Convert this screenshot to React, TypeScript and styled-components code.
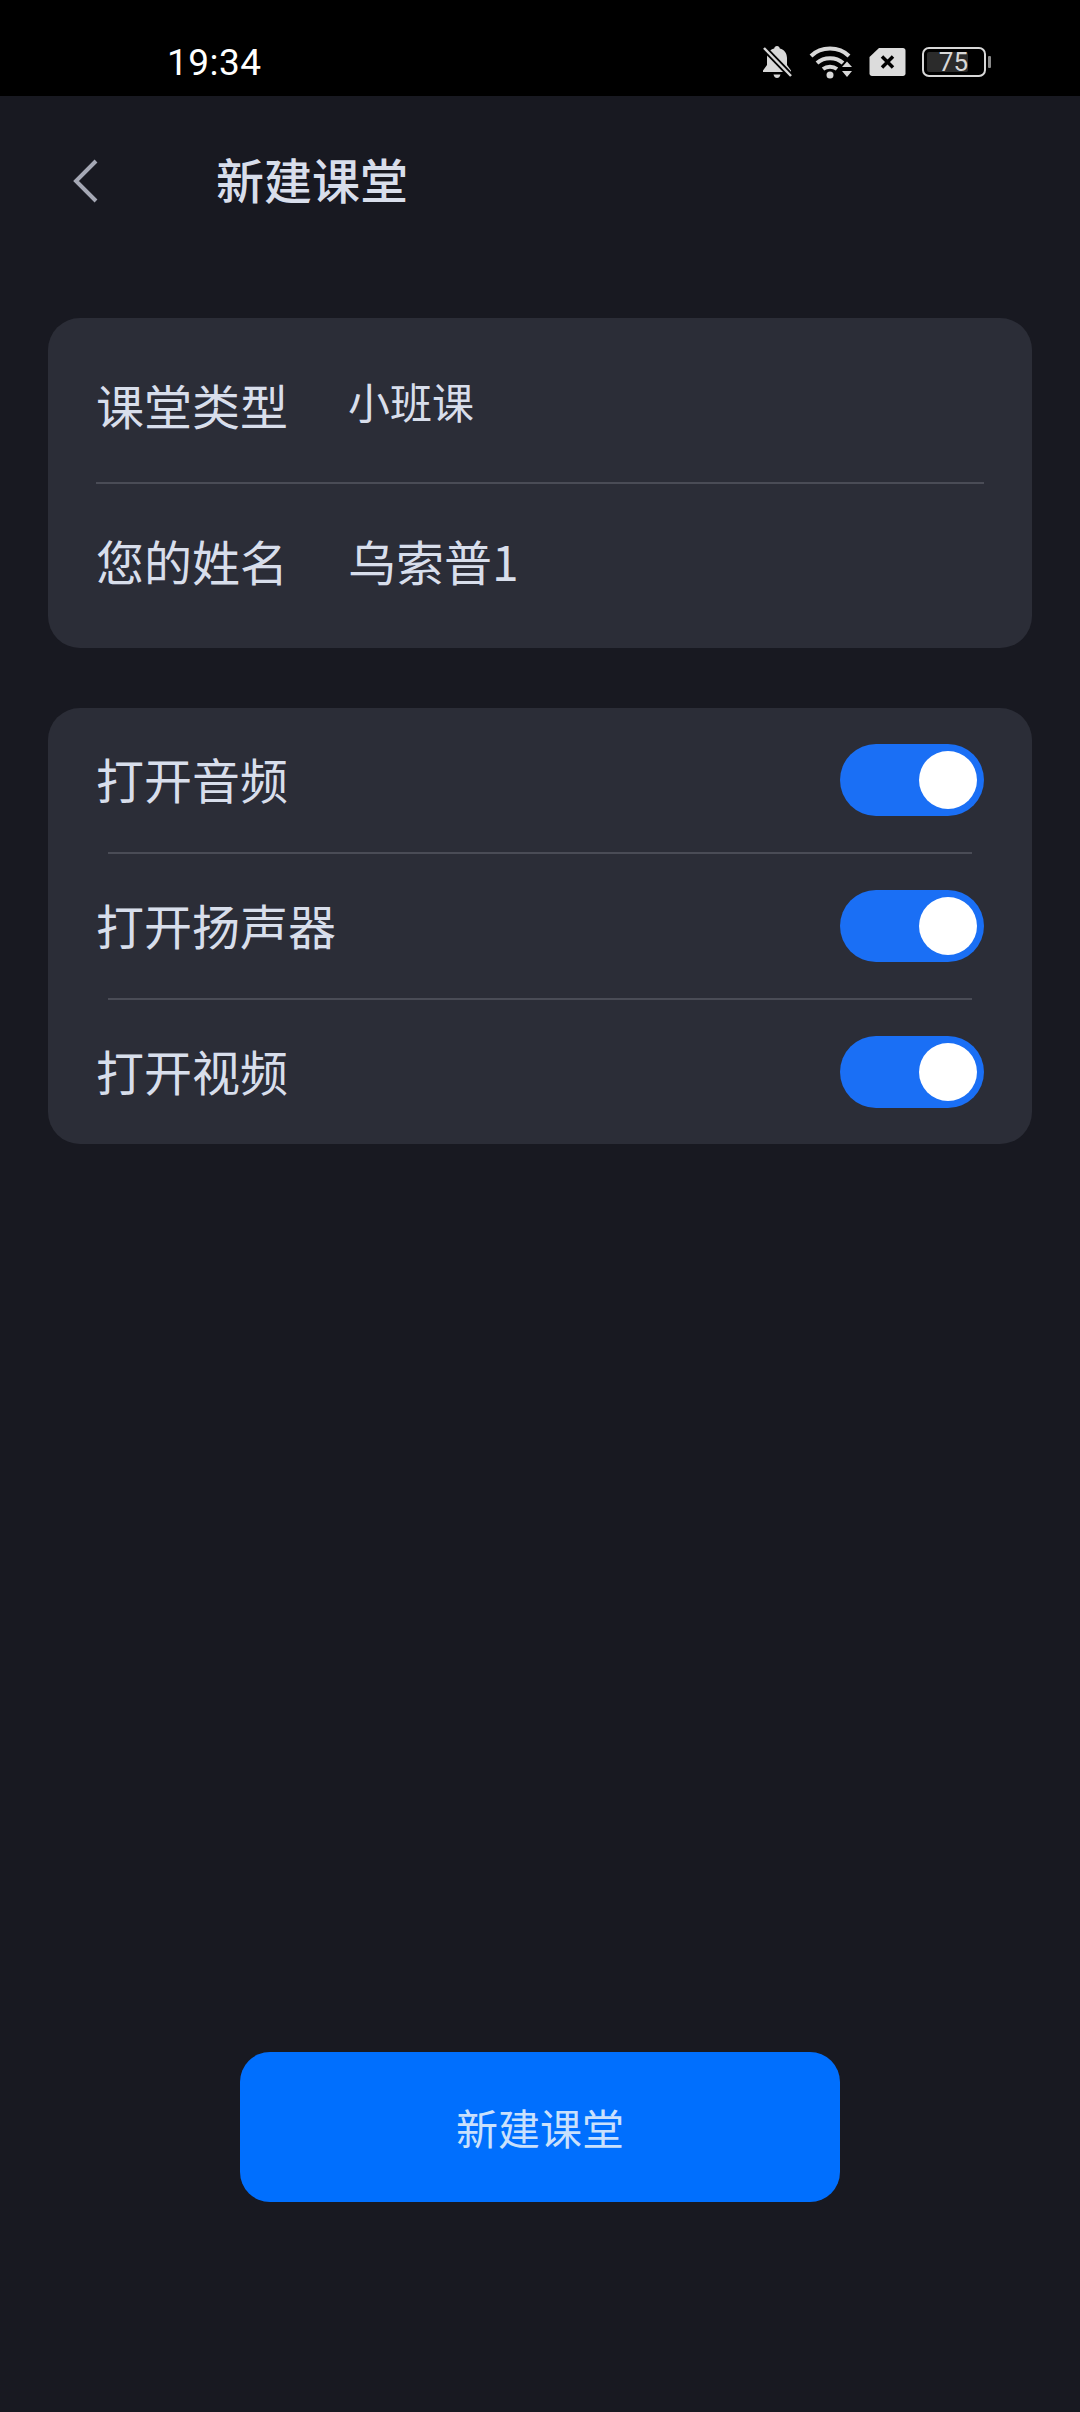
import styled, { createGlobalStyle } from "styled-components";

const GlobalStyle = createGlobalStyle`
  * {
    box-sizing: border-box;
  }
  html, body {
    margin: 0;
    padding: 0;
    background: #181921;
    font-family: "Noto Sans CJK SC", "Noto Sans", sans-serif;
  }
`;

const Page = styled.div`
  width: 1080px;
  height: 2412px;
  display: flex;
  flex-direction: column;
  background: #181921;
  overflow: hidden;
`;

const StatusBar = styled.div`
  height: 96px;
  flex-shrink: 0;
  display: flex;
  align-items: center;
  background: #000;
  padding: 0 90px 0 167px;
  color: #fff;
`;

const Time = styled.div`
  font-family: Roboto, sans-serif;
  font-size: 37px;
  line-height: 44px;
  letter-spacing: 0.5px;
  margin-top: 30px;
  margin-right: auto;
`;

const StatusIcons = styled.div`
  display: flex;
  align-items: center;
  margin-top: 27px;
`;

const BellIcon = styled.svg`
  width: 32px;
  height: 34px;
  margin-right: 16px;
`;

const WifiIcon = styled.svg`
  width: 44px;
  height: 34px;
  margin-right: 16px;
`;

const SimIcon = styled.svg`
  width: 37px;
  height: 30px;
  margin-right: 16px;
`;

const Battery = styled.div`
  position: relative;
  width: 64px;
  height: 30px;
  border: 2px solid #d8d8d8;
  border-radius: 7px;
  padding: 3px;
  margin-right: 4px;
  display: flex;

  &::after {
    content: "";
    position: absolute;
    right: -7px;
    top: 7px;
    width: 3px;
    height: 12px;
    border-radius: 1px;
    background: #8a8a8a;
  }
`;

const BatteryLevel = styled.div`
  width: 41px;
  height: 20px;
  border-radius: 2px;
  background: #2b2b2b;
  color: #d8d8d8;
  font-family: Roboto, sans-serif;
  font-size: 26px;
  line-height: 20px;
  text-align: right;
`;

const Header = styled.div`
  height: 170px;
  flex-shrink: 0;
  display: flex;
  align-items: center;
  padding-left: 72px;
`;

const BackIcon = styled.svg`
  width: 28px;
  height: 44px;
  margin-right: 116px;
`;

const Title = styled.div`
  font-size: 48px;
  font-weight: 500;
  line-height: 60px;
  margin-bottom: 6px;
  color: #d8deeb;
`;

const Card = styled.div`
  margin: 0 48px;
  padding: 0 48px;
  background: #2b2d37;
  border-radius: 32px;
`;

const InfoCard = styled(Card)`
  margin-top: 52px;
`;

const SwitchCard = styled(Card)`
  margin-top: 60px;
  height: 436px;
  display: flex;
  flex-direction: column;
  justify-content: center;
`;

const InfoRow = styled.div<{ $shift: number }>`
  height: 165px;
  display: flex;
  align-items: center;
  padding-top: ${(p) => (p.$shift > 0 ? p.$shift : 0)}px;
  padding-bottom: ${(p) => (p.$shift < 0 ? -p.$shift : 0)}px;
  & + & {
    border-top: 2px solid #4a4c56;
    margin-top: -1px;
    height: 166px;
  }
`;

const Label = styled.div`
  font-size: 48px;
  line-height: 60px;
  color: #d8deeb;
`;

const InfoLabel = styled(Label)`
  width: 252px;
`;

const SwitchLabel = styled(Label)`
  margin-bottom: 4px;
`;

const Value = styled.div<{ $small?: boolean }>`
  font-size: ${(p) => (p.$small ? "42px" : "48px")};
  line-height: 60px;
  color: #d8deeb;
  margin-top: ${(p) => (p.$small ? "-6px" : "0")};
`;

const SwitchRow = styled.div`
  height: 146px;
  flex-shrink: 0;
  display: flex;
  align-items: center;
  justify-content: space-between;
`;

const Divider = styled.div`
  height: 2px;
  flex-shrink: 0;
  margin: -1px 12px;
  background: #4a4c56;
`;

const Toggle = styled.div`
  width: 144px;
  height: 72px;
  border-radius: 36px;
  background: #1a6ff5;
  display: flex;
  align-items: center;
  justify-content: flex-end;
  padding-right: 7px;
`;

const Knob = styled.div`
  width: 58px;
  height: 58px;
  border-radius: 50%;
  background: #fff;
`;

const CreateButton = styled.div`
  width: 600px;
  height: 150px;
  flex-shrink: 0;
  margin: auto auto 210px;
  border-radius: 30px;
  background: #006ffe;
  color: #c9e0fc;
  font-size: 42px;
  padding-bottom: 2px;
  display: flex;
  align-items: center;
  justify-content: center;
`;

const switches = ["打开音频", "打开扬声器", "打开视频"];

function App() {
  return (
    <>
      <GlobalStyle />
      <Page>
        <StatusBar>
          <Time>19:34</Time>
          <StatusIcons>
            <BellIcon viewBox="0 0 32 34">
              <path
                d="M16 1c1.600 0 2.600 1 2.800 2.400C23.400 4.600 26 8.400 26 13v7l4 5.500V27H2v-1.500l4-5.500v-7c0-4.600 2.600-8.400 7.200-9.600C13.400 2 14.400 1 16 1z"
                fill="#d8d8d8"
              />
              <path d="M12.500 29.500h7C19 32 17.500 33 16 33s-3-1-3.500-3.500z" fill="#d8d8d8" />
              <path d="M3 3l27 28" stroke="#000" strokeWidth="6" />
              <path d="M3 3l27 28" stroke="#d8d8d8" strokeWidth="2.500" />
            </BellIcon>
            <WifiIcon viewBox="0 0 44 34">
              <g fill="none" stroke="#d8d8d8" strokeWidth="4">
                <path d="M2 11C12 1 30 1 40 11" />
                <path d="M8 18c7-6.500 19-6.500 26 0" />
                <path d="M14 24c4-3 10-3 14 0" />
              </g>
              <circle cx="21" cy="30" r="3.500" fill="#d8d8d8" />
              <path d="M33 22l5-5.500 5 5.500zM33 26h10l-5 6z" fill="#d8d8d8" />
            </WifiIcon>
            <SimIcon viewBox="0 0 37 30">
              <path
                d="M10 1h24c1.400 0 2.500 1.100 2.500 2.500v23c0 1.400-1.100 2.500-2.500 2.500H3c-1.400 0-2.500-1.100-2.500-2.500V10z"
                fill="#dcdcdc"
              />
              <path d="M13 9.500l11 11M24 9.500l-11 11" stroke="#000" strokeWidth="3.500" />
            </SimIcon>
            <Battery>
              <BatteryLevel>75</BatteryLevel>
            </Battery>
          </StatusIcons>
        </StatusBar>
        <Header>
          <BackIcon viewBox="0 0 28 44">
            <path d="M24 2L4 22l20 20" fill="none" stroke="#a5a8b5" strokeWidth="4" />
          </BackIcon>
          <Title>新建课堂</Title>
        </Header>
        <InfoCard>
          <InfoRow $shift={6}>
            <InfoLabel>课堂类型</InfoLabel>
            <Value $small>小班课</Value>
          </InfoRow>
          <InfoRow $shift={-12}>
            <InfoLabel>您的姓名</InfoLabel>
            <Value>乌索普1</Value>
          </InfoRow>
        </InfoCard>
        <SwitchCard>
          {switches.map((name, i) => (
            <div key={name}>
              {i > 0 && <Divider />}
              <SwitchRow>
                <SwitchLabel>{name}</SwitchLabel>
                <Toggle>
                  <Knob />
                </Toggle>
              </SwitchRow>
            </div>
          ))}
        </SwitchCard>
        <CreateButton>新建课堂</CreateButton>
      </Page>
    </>
  );
}

export default App;
